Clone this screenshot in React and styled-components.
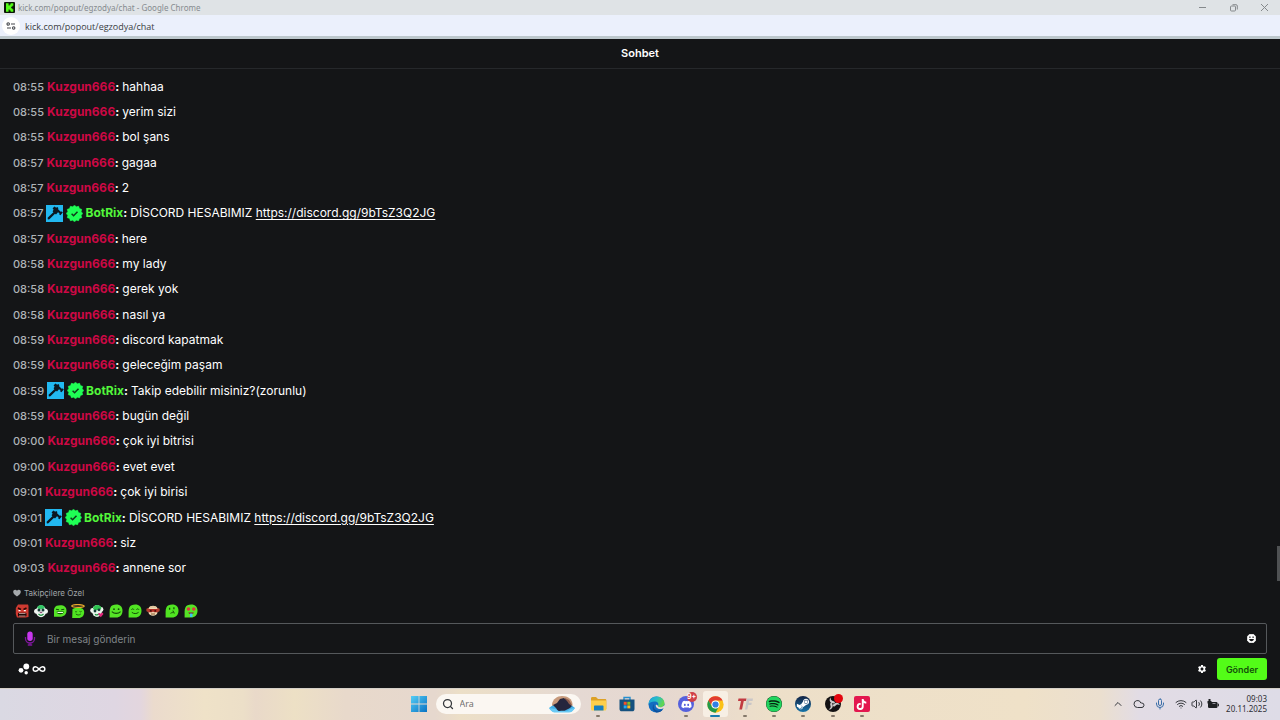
import React from "react";
import styled, { createGlobalStyle } from "styled-components";
import { FaDiscord, FaSteamSymbol, FaTiktok, FaSpotify } from "react-icons/fa";
import { MdSettings } from "react-icons/md";
import { Search, ChevronUp, Cloud, Mic, Wifi, Volume2, Infinity as InfinityIcon } from "lucide-react";

const GlobalStyle = createGlobalStyle`
  * { box-sizing: border-box; }
  body {
    margin: 0;
    background: #141517;
    font-family: Inter, "Liberation Sans", sans-serif;
  }
  button { border: 0; padding: 0; background: none; color: inherit; font: inherit; cursor: pointer; }
  svg { display: block; flex: none; }
`;

const Screen = styled.div`
  display: flex;
  flex-direction: column;
  min-height: 100vh;
`;

const TitleBar = styled.header`
  display: flex;
  align-items: center;
  gap: 3px;
  height: 15px;
  padding: 0 10px 0 4px;
  background: #dfe3e6;
  color: #868b8f;
  font: 8px/15px "Noto Sans", sans-serif;
`;

const WindowTitle = styled.span`
  flex: 1;
`;

const WindowControls = styled.div`
  display: flex;
  gap: 20px;
  color: #85898c;
`;

const WindowButton = styled.button`
  display: grid;
  place-items: center;
  width: 11px;
  height: 15px;
`;

const AddressBar = styled.div`
  display: flex;
  align-items: center;
  gap: 5px;
  height: 24px;
  padding-left: 2px;
  background: #ebf0fc;
  border-bottom: 3px solid #bcc7cc;
`;

const SiteInfo = styled.button`
  display: grid;
  place-items: center;
  width: 18px;
  height: 18px;
  border-radius: 9px;
  background: #fff;
`;

const Address = styled.input`
  flex: 1;
  min-width: 0;
  border: 0;
  padding: 2px 0 0;
  outline: 0;
  background: none;
  color: #3a3d42;
  font: 9px/18px "Open Sans", sans-serif;
`;

const Chat = styled.main`
  flex: 1;
  display: flex;
  flex-direction: column;
  color: #fff;
`;

const ChatHeader = styled.h1`
  margin: 0;
  height: 30px;
  border-bottom: 1px solid #26282b;
  font-size: 11px;
  font-weight: 600;
  line-height: 29px;
  text-align: center;
`;

const MessageArea = styled.section`
  flex: 1;
  display: flex;
  align-items: flex-end;
  padding: 5px 0 2px 13px;
`;

const MessageList = styled.ol`
  flex: 1;
  align-self: stretch;
  display: flex;
  flex-direction: column;
  margin: 0;
  padding: 0;
  list-style: none;
`;

const Message = styled.li`
  flex: 1;
  display: flex;
  align-items: center;
  font-size: 12px;
  line-height: 20px;
  white-space: pre;
`;

const Time = styled.time`
  margin-right: 3px;
  color: #afb4b7;
  font-size: 11px;
  font-weight: 500;
`;

const Author = styled.b`
  color: ${(p) => (p.$bot ? "#53f83b" : "#cd0845")};
  font-weight: 700;
`;

const Colon = styled.b`
  margin-right: 3px;
`;

const Badges = styled.span`
  display: flex;
  gap: 3px;
  margin-right: 2px;
`;

const MessageLink = styled.a`
  color: #fff;
  text-decoration: underline;
  text-underline-offset: 2px;
`;

const ScrollThumb = styled.div`
  width: 3px;
  height: 35px;
  background: #4f5153;
`;

const Composer = styled.form`
  padding: 0 13px 8px;
`;

const ModeNote = styled.p`
  display: flex;
  align-items: center;
  gap: 3px;
  margin: 0;
  height: 20px;
  color: #a0a5a8;
  font-size: 8px;
`;

const EmoteRow = styled.div`
  display: flex;
  width: 187px;
  height: 16px;
  margin-bottom: 4px;
`;

const EmoteButton = styled.button`
  flex: 1;
  display: grid;
  place-items: center;
`;

const Field = styled.label`
  display: flex;
  align-items: center;
  gap: 11px;
  height: 31px;
  padding: 0 10px;
  border: 1px solid #55585b;
  border-radius: 2px;
`;

const MessageInput = styled.input`
  flex: 1;
  min-width: 0;
  border: 0;
  padding: 0;
  outline: 0;
  background: none;
  color: #fff;
  font: 10px/20px Inter, sans-serif;
  &::placeholder { color: #808589; opacity: 1; }
`;

const ComposerFooter = styled.div`
  display: flex;
  align-items: center;
  gap: 2px;
  padding: 4px 0 0 5px;
`;

const SettingsButton = styled.button`
  margin-left: auto;
  margin-right: 8px;
`;

const SendButton = styled.button`
  width: 50px;
  height: 22px;
  border-radius: 3px;
  background: #53fc18;
  color: #14500a;
  font-size: 9px;
  font-weight: 600;
`;

const Taskbar = styled.footer`
  display: grid;
  grid-template-columns: 1fr auto 1fr;
  align-items: center;
  height: 32px;
  box-shadow: inset 0 1px #d5d0c8;
  background: linear-gradient(90deg, #dad9e3 0%, #dfd6e2 9%, #e3d6de 11%, #ebdbcd 12%, #efe2c8 16%, #ecdfc8 19%, #e9d9c9 20%, #ede0c5 23%, #e8d9cb 27%, #e6d8ce 34%, #ecdfc7 36%, #e5d9d3 45%, #e6d8d0 52%, #eddfc9 60%, #efe1c8 80%, #ebdfcf 86%, #e2dce5 89%, #dedce7 100%);
`;

const TaskbarCenter = styled.nav`
  grid-column: 2;
  display: flex;
  align-items: center;
`;

const StartButton = styled.button`
  display: grid;
  place-items: center;
  width: 30px;
  height: 30px;
`;

const SearchBox = styled.label`
  display: flex;
  align-items: center;
  gap: 6px;
  width: 145px;
  height: 20px;
  margin: 0 3px 0 2px;
  padding: 0 5px 0 6px;
  border-radius: 10px;
  background: #fbf7f2;
  color: #33363a;
`;

const SearchInput = styled.input`
  flex: 1;
  min-width: 0;
  border: 0;
  padding: 0;
  outline: 0;
  background: none;
  font: 9px/18px "Open Sans", sans-serif;
  &::placeholder { color: #6c6a69; opacity: 1; }
`;

const AppRow = styled.div`
  display: flex;
  width: 293px;
`;

const AppSlot = styled.div`
  flex: 1;
  display: flex;
  justify-content: center;
`;

const AppButton = styled.button`
  position: relative;
  display: grid;
  place-items: center;
  width: 25px;
  height: 26px;
  border-radius: 3px;
  background: ${(p) => (p.$active ? "#f7efe4" : "none")};
  &::after {
    content: "";
    position: absolute;
    bottom: 0;
    width: ${(p) => (p.$active ? "10px" : "4px")};
    height: 2px;
    border-radius: 1px;
    background: ${(p) => (p.$active ? "#1a7cb0" : "#85796b")};
    display: ${(p) => (p.$idle ? "none" : "block")};
  }
`;

const AppTile = styled.span`
  display: grid;
  place-items: center;
  width: 16px;
  height: 16px;
  border-radius: ${(p) => p.$radius || "8px"};
  background: ${(p) => p.$fill};
  color: #fff;
`;

const CountBadge = styled.span`
  position: absolute;
  top: 1px;
  right: 2px;
  width: 10px;
  height: 10px;
  border-radius: 5px;
  background: #cf3f48;
  color: #fff;
  font: 700 7px/10px Inter, sans-serif;
  text-align: center;
`;

const RecordDot = styled.span`
  position: absolute;
  top: 3px;
  right: 2px;
  width: 9px;
  height: 9px;
  border-radius: 5px;
  background: #e3060f;
`;

const Tray = styled.div`
  grid-column: 3;
  justify-self: end;
  display: flex;
  align-items: center;
  padding-right: 13px;
  color: #35373c;
`;

const TrayGroup = styled.div`
  display: flex;
  margin-right: 3px;
`;

const TrayButton = styled.button`
  display: grid;
  place-items: center;
  width: ${(p) => (p.$tight ? "16px" : "21px")};
  height: 22px;
`;

const Clock = styled.time`
  width: 46px;
  padding-bottom: 1px;
  color: #2d2e33;
  font: 8px/10px "Noto Sans", sans-serif;
  text-align: right;
`;

const KickLogo = () => (
  <svg width="11" height="11" viewBox="0 0 11 11" aria-hidden="true">
    <rect width="11" height="11" rx="1" fill="#0b1508" />
    <path d="M2 1.2h2.6v2.3h1V2.400h1V1.200h2.700v2.600h-1v1H7.200v1.400h1.100v1h1v2.600H6.600V8.600h-1V7.500h-1v2.300H2z" fill="#53fc18" />
  </svg>
);

const TuneIcon = () => (
  <svg width="10" height="8" viewBox="0 0 10 8" fill="none" stroke="#44474c" strokeWidth="1.100" aria-hidden="true">
    <circle cx="2.200" cy="2" r="1.200" />
    <path d="M5 2h4M1 6h4" />
    <circle cx="7.700" cy="6" r="1.200" />
  </svg>
);

const HammerBadge = () => (
  <svg width="17" height="17" viewBox="0 0 17 17" aria-label="Moderator">
    <rect width="17" height="17" fill="#22b8f0" />
    <path d="M6.600 3.300l2-1.800 1.500 1.300 1.200-.9 1 1-.2 1.300 2.600 2.500 1.200-.2.9 1-2.400 2.700-1.100-.8.1-1.200-1.400-1L10 9.500 9 8.800l-5.600 5.400-1.500.2-.3-1.600L7.400 7.300l-.8-1 1-1.500z" fill="#0b1720" />
  </svg>
);

const sealPoints = Array.from({ length: 24 }, (_, i) => {
  const r = i % 2 ? 6.900 : 8.300;
  const a = (i * Math.PI) / 12;
  return `${(8.5 + r * Math.sin(a)).toFixed(2)},${(8.5 - r * Math.cos(a)).toFixed(2)}`;
}).join(" ");

const VerifiedBadge = () => (
  <svg width="17" height="17" viewBox="0 0 17 17" aria-label="Verified">
    <polygon points={sealPoints} fill="#1fff55" stroke="#1fff55" strokeWidth="0.600" strokeLinejoin="round" />
    <path d="M5.600 8.700l2 2 3.900-4" fill="none" stroke="#10381b" strokeWidth="1.500" />
  </svg>
);

const HeartIcon = () => (
  <svg width="8" height="8" viewBox="0 0 8 8" fill="#a5a9ac" aria-hidden="true">
    <path d="M4 7.500C1.500 5.800.2 4.500.2 2.700.2 1.400 1.100.7 2.100.7c.8 0 1.500.4 1.900 1 .4-.6 1.100-1 1.900-1 1 0 1.900.7 1.900 2 0 1.800-1.300 3.100-3.800 4.800z" />
  </svg>
);

const MicPurple = () => (
  <svg width="12" height="15" viewBox="0 0 12 15" fill="none" aria-hidden="true">
    <rect x="3.300" y="0.500" width="5.400" height="9.500" rx="2.700" fill="#c837ef" />
    <path d="M1.500 6v1.500a4.500 4.500 0 0 0 9 0V6M6 12v2M3.800 14h4.400" stroke="#7e179b" strokeWidth="1.300" />
  </svg>
);

const SmileIcon = () => (
  <svg width="9" height="9" viewBox="0 0 9 9" aria-hidden="true">
    <path d="M2.500.3h4L8.700 2.500v4L6.500 8.700h-4L.3 6.500v-4z" fill="#fff" stroke="#fff" strokeWidth="0.600" strokeLinejoin="round" />
    <rect x="2.300" y="2.500" width="1.200" height="1.400" fill="#141517" />
    <rect x="5.500" y="2.500" width="1.200" height="1.400" fill="#141517" />
    <path d="M2.100 5.100h4.800c-.2 1.400-1.100 2.100-2.400 2.100S2.300 6.500 2.100 5.100z" fill="#141517" />
  </svg>
);

const BubblesIcon = () => (
  <svg width="12" height="12" viewBox="0 0 12 12" fill="#fff" aria-hidden="true">
    <circle cx="8.300" cy="3.500" r="2.900" />
    <circle cx="3" cy="7.300" r="2.400" />
    <circle cx="8.200" cy="9.700" r="1.700" />
  </svg>
);

const blob = "M1.500 3.300C2.300 1.300 4.500.5 7.300.5c4 0 6.200 2.400 6.200 6.200 0 4-2.500 6.800-6.500 6.800H.6V7.500c0-1.600.3-3 .9-4.200z";

const faces = {
  rage: (
    <>
      <path d="M3 .5h10l.5 1.500v11l-3 .5H2L.8 10V4z" fill="#cf3a31" />
      <path d="M3 4l3 1.500M11.500 4L8.500 5.500" stroke="#2a0906" strokeWidth="1.500" />
      <path d="M3.500 6h2v1.300h-2zM8.800 6h2v1.300h-2z" fill="#fff" />
      <rect x="3" y="8.700" width="8.500" height="3.800" rx="1" fill="#1e0805" />
      <path d="M4 9.500h6.500M4 12h6.500" stroke="#e9c2bd" strokeWidth="0.700" />
    </>
  ),
  clown: (
    <>
      <circle cx="2.600" cy="7.200" r="2.500" fill="#f1f5f0" />
      <circle cx="11.400" cy="7.200" r="2.500" fill="#f1f5f0" />
      <ellipse cx="7" cy="7.200" rx="5" ry="6" fill="#eff6f1" />
      <path d="M3 4c1-4 7-4 8 0-2 1.500-6 1.500-8 0z" fill="#33c765" />
      <circle cx="5" cy="6" r="1.500" fill="#173b37" />
      <circle cx="9" cy="6" r="1.500" fill="#173b37" />
      <path d="M5.800 7.700h2.400v1.400H5.800z" fill="#8f557a" />
      <path d="M4.500 10c1.500 1.700 3.500 1.700 5 0" stroke="#1d9142" strokeWidth="1.200" fill="none" />
    </>
  ),
  grin: (
    <>
      <path d="M1.500 4C2.300 2 4.500 1.300 7.300 1.300c4 0 6.200 2 6.200 5.400 0 3.800-2.500 6-6.500 6H1V7.500C1 6 1 5 1.500 4z" fill="#55e526" />
      <path d="M3 5.300l3 .4M8.200 5.700l3-.4" stroke="#154c09" strokeWidth="1.100" />
      <path d="M3.600 7.500h7.200c-.3 2.100-1.600 2.700-3.600 2.700s-3.300-.6-3.600-2.700z" fill="#154c09" />
      <path d="M4.400 8h5.600v1H4.400z" fill="#e9ffe0" />
    </>
  ),
  angel: (
    <>
      <path d="M1.500 5.100C2.800 4 5 3.700 7.300 3.700c3.800 0 5.900 1.400 5.900 4.300 0 3.800-2.300 6-5.700 6H1.200z" fill="#50e522" />
      <ellipse cx="7" cy="2" rx="6.200" ry="1.400" fill="none" stroke="#e8a92c" strokeWidth="1.300" />
      <path d="M4 7.400c.6.600 1.500.6 2.100 0M8.500 7.400c.6.600 1.500.6 2.100 0M4.800 10c1.600 1.300 3.400 1.300 5 0" stroke="#1b670b" fill="none" />
    </>
  ),
  clownLove: (
    <>
      <circle cx="2.600" cy="6.500" r="2.400" fill="#f1f5f0" />
      <circle cx="11" cy="5.500" r="2.400" fill="#f1f5f0" />
      <ellipse cx="7" cy="7" rx="5" ry="6" fill="#e6f5e9" />
      <path d="M3 5c0-4.500 7-5.500 8.500-1-1 2.500-6 3-8.500 1z" fill="#2fc451" />
      <circle cx="5" cy="7" r="1.400" fill="#173b37" />
      <circle cx="9" cy="5.800" r="1.400" fill="#173b37" />
      <path d="M5 10.300c1.500 1.200 2.500 1 4-.3" stroke="#1d9142" strokeWidth="1.200" fill="none" />
      <path d="M10.800 13.300L8.300 10.600c-.5-1.500 1.300-2.200 2.300-.9.600-1.600 3.100-1.200 2.700.6z" fill="#e0287b" />
    </>
  ),
  smile: (
    <>
      <path d={blob} fill="#55e526" />
      <circle cx="5" cy="5.200" r="0.900" fill="#154c09" />
      <circle cx="9.600" cy="5.200" r="0.900" fill="#154c09" />
      <path d="M2.800 7.600c2.500 2.300 6.300 2.300 8.800 0" stroke="#154c09" strokeWidth="1.100" fill="none" />
    </>
  ),
  happy: (
    <>
      <path d={blob} fill="#50e522" />
      <path d="M3.500 5.700c.7-1.200 1.700-1.200 2.400 0M8.500 5.700c.7-1.200 1.700-1.200 2.400 0M3.800 8.300c2 1.700 4.800 1.700 6.800 0" stroke="#154c09" fill="none" />
    </>
  ),
  monkey: (
    <>
      <circle cx="2.200" cy="6" r="2" fill="#b0402d" />
      <circle cx="11.800" cy="6" r="2" fill="#b0402d" />
      <path d="M2.500 5c0-4 9-4 9 0v3c0 5-9 5-9 0z" fill="#efd9b4" />
      <path d="M2.800 4c1-3 7.500-3 8.400 0z" fill="#e3c9a0" />
      <path d="M2.200 5h9.600v3.300H8L7 7.400l-1 .9H2.200z" fill="#b02a22" />
      <path d="M4 6.800h1.600M8.500 6.800H10" stroke="#2a0906" strokeWidth="1.200" />
      <path d="M5 10h4" stroke="#8b5a33" />
    </>
  ),
  unsure: (
    <>
      <path d={blob} fill="#50e522" />
      <path d="M4.600 3.800v2M8.900 3.300v2" stroke="#154c09" strokeWidth="1.300" />
      <path d="M5.500 9.300c1.200-.9 3-.9 4.300-.2M7.500 7l1.500.5" stroke="#154c09" fill="none" />
    </>
  ),
  drool: (
    <>
      <path d={blob} fill="#55e526" />
      <circle cx="4.500" cy="5" r="1.800" fill="#e23244" />
      <circle cx="9.800" cy="5" r="1.800" fill="#e23244" />
      <path d="M4.300 8.500h5.500c-.5 2-4.800 2-5.500 0z" fill="#8c1630" />
      <path d="M6 9.500h2.500V13H6z" fill="#38c9ed" />
    </>
  ),
};

const Emote = ({ name }) => (
  <svg width="14" height="14" viewBox="0 0 14 14" aria-hidden="true">
    {faces[name]}
  </svg>
);

const WindowsLogo = () => (
  <svg width="16" height="16" viewBox="0 0 16 16" aria-hidden="true">
    <defs>
      <linearGradient id="win" x1="0" y1="0" x2="1" y2="1">
        <stop offset="0" stopColor="#55cdf4" />
        <stop offset="1" stopColor="#0872c4" />
      </linearGradient>
    </defs>
    <path d="M0 0h7.600v7.600H0zM8.400 0H16v7.600H8.400zM0 8.400h7.600V16H0zM8.400 8.400H16V16H8.400z" fill="url(#win)" />
  </svg>
);

const SearchArt = () => (
  <svg width="28" height="18" viewBox="0 0 28 18" aria-hidden="true">
    <path d="M4 9C5 4 9 1 14 1c6 0 10 3 10.500 8v3H4z" fill="#c79a7c" />
    <path d="M17 3l4 2 3 5-7 1z" fill="#8d5d4d" />
    <path d="M1 13c3-3 8-4 13-4s10 1 13 4l-4 4H5z" fill="#43b0e8" />
    <path d="M8 13l-3-3 4-2 3-4 4-1 3 3 2 3 3 2-2 2-6 3H10z" fill="#25263d" />
    <path d="M1 13c3 1 6 0 8 2s5 0 8 1 5-3 10-3c-2 3-4 4.500-6 4.500H6C4 17 2 15 1 13z" fill="#69c9f4" />
  </svg>
);

const FolderIcon = () => (
  <svg width="17" height="16" viewBox="0 0 17 16" aria-hidden="true">
    <path d="M1 2.500C1 1.500 1.500 1 2.500 1H6l2 2h7c.8 0 1.300.5 1.300 1.300V13H1z" fill="#dda126" />
    <path d="M1 4.500h15.300V13c0 1-.5 1.500-1.500 1.500H2.500C1.500 14.500 1 14 1 13z" fill="#fdcf4c" />
    <path d="M4 10.500c0-.6.400-1 1-1h7.500c.6 0 1 .4 1 1v4H4z" fill="#187fc0" />
  </svg>
);

const StoreIcon = () => (
  <svg width="16" height="16" viewBox="0 0 16 16" aria-hidden="true">
    <path d="M5 4V1.500h6V4" fill="none" stroke="#258fd0" strokeWidth="1.400" />
    <path d="M.5 3.500h15V13c0 1.400-.9 2.300-2.300 2.300H2.800C1.400 15.300.5 14.400.5 13z" fill="#15517f" />
    <path d="M4.700 5.800h3v3h-3z" fill="#f2532c" />
    <path d="M8.300 5.800h3v3h-3z" fill="#84bd28" />
    <path d="M4.700 9.400h3v3h-3z" fill="#25aaf0" />
    <path d="M8.300 9.400h3v3h-3z" fill="#fcbc24" />
  </svg>
);

const EdgeIcon = () => (
  <svg width="17" height="17" viewBox="0 0 17 17" aria-hidden="true">
    <defs>
      <linearGradient id="edgeTop" x1="0" y1="0" x2="1" y2="0.400">
        <stop offset="0" stopColor="#1f9fdc" />
        <stop offset="0.500" stopColor="#26bccb" />
        <stop offset="1" stopColor="#61d651" />
      </linearGradient>
    </defs>
    <circle cx="8.500" cy="8.500" r="8" fill="#126cc0" />
    <path d="M.5 8.500C.7 4 4 .5 8.600.5c4.700 0 7.900 3.300 7.900 6.700 0 2.600-1.900 4-4.200 4-1.600 0-2.700-.6-2.300-1.400.7-1.100.8-3.800-2.600-4.300C4.300 5.100 1.500 6.500.5 8.500z" fill="url(#edgeTop)" />
    <path d="M6 8c-1.500 4.500 2 8 7 6.200 1-.4 1.700-1 2.200-1.700-1.300 3-4.200 4-6.700 4C4.500 15 3.500 10.500 6 8z" fill="#0d4f9c" />
    <path d="M8 8.500c-1 2 1 4.700 4.500 4.500 1.500 0 2.600-.6 3.300-1l-.7 1.800L17 15V9.500l-1.500.5c-1 1-2.200 1.200-3.200 1.200-1.600 0-2.700-.6-2.300-1.400z" fill="#e8dbd0" />
  </svg>
);

const ChromeIcon = () => (
  <svg width="17" height="17" viewBox="0 0 24 24" aria-hidden="true">
    <circle cx="12" cy="12" r="11.500" fill="#fbc116" />
    <path d="M2 6.300A11.500 11.500 0 0 1 22 6.300H12a5.700 5.700 0 0 0-5 8.500z" fill="#e23c30" />
    <path d="M2 6.300l5 8.500a5.700 5.700 0 0 0 9.900.1L12 23.500A11.500 11.500 0 0 1 2 6.300z" fill="#229a4b" />
    <circle cx="12" cy="12" r="5.700" fill="#fff" />
    <circle cx="12" cy="12" r="4.400" fill="#317fe4" />
  </svg>
);

const TfIcon = () => (
  <svg width="16" height="14" viewBox="0 0 16 14" aria-hidden="true">
    <path d="M1.500 1.500h8L9 4H6.800L5 12.500H2.300L4 4H1z" fill="#c13a42" />
    <path d="M10 1.500h6L15.500 4h-3.300l-.4 1.800h3l-.5 2.200h-3l-1 4.500H8z" fill="#c9c6c7" />
  </svg>
);

const ObsIcon = () => (
  <svg width="16" height="16" viewBox="0 0 16 16" aria-hidden="true">
    <circle cx="8" cy="8" r="8" fill="#131113" />
    {[0, 120, 240].map((angle) => (
      <path
        key={angle}
        d="M8 7.300C5.600 7 4.200 5.200 4.700 2.900c.2-.6.500-1 .9-1.300-.2 2.200 1 3.400 3 3.600 1 .2 1.500 1 1.300 1.900-.5.500-1.200.500-1.900.2z"
        fill="#cbc8c8"
        transform={`rotate(${angle} 8 8)`}
      />
    ))}
  </svg>
);

const BatteryIcon = () => (
  <svg width="12" height="10" viewBox="0 0 12 10" fill="#1e2023" aria-hidden="true">
    <rect x="1" y="3" width="9.500" height="6" rx="1.200" />
    <rect x="10.700" y="4.700" width="1.200" height="2.600" />
    <path d="M1.500 0v2H.5v2.500h4V2h-1V0z" />
    <path d="M5.500 4.500h3" stroke="#dedce7" strokeWidth="0.600" />
  </svg>
);

const user = "Kuzgun666";
const messages = [
  { time: "08:55", text: "hahhaa" },
  { time: "08:55", text: "yerim sizi" },
  { time: "08:55", text: "bol şans" },
  { time: "08:57", text: "gagaa" },
  { time: "08:57", text: "2" },
  { time: "08:57", bot: true, text: "DİSCORD HESABIMIZ ", link: "https://discord.gg/9bTsZ3Q2JG" },
  { time: "08:57", text: "here" },
  { time: "08:58", text: "my lady" },
  { time: "08:58", text: "gerek yok" },
  { time: "08:58", text: "nasıl ya" },
  { time: "08:59", text: "discord kapatmak" },
  { time: "08:59", text: "geleceğim paşam" },
  { time: "08:59", bot: true, text: "Takip edebilir misiniz?(zorunlu)" },
  { time: "08:59", text: "bugün değil" },
  { time: "09:00", text: "çok iyi bitrisi" },
  { time: "09:00", text: "evet evet" },
  { time: "09:01", text: "çok iyi birisi" },
  { time: "09:01", bot: true, text: "DİSCORD HESABIMIZ ", link: "https://discord.gg/9bTsZ3Q2JG" },
  { time: "09:01", text: "siz" },
  { time: "09:03", text: "annene sor" },
];

const emotes = ["rage", "clown", "grin", "angel", "clownLove", "smile", "happy", "monkey", "unsure", "drool"];

const apps = [
  { name: "File Explorer", icon: <FolderIcon /> },
  { name: "Store", icon: <StoreIcon />, idle: true },
  { name: "Edge", icon: <EdgeIcon />, idle: true },
  { name: "Discord", icon: <AppTile $fill="#5560dd"><FaDiscord size={11} /></AppTile>, extra: <CountBadge>9+</CountBadge> },
  { name: "Chrome", icon: <ChromeIcon />, active: true },
  { name: "TF", icon: <TfIcon /> },
  { name: "Spotify", icon: <AppTile $fill="#06200e"><FaSpotify size={16} color="#22d45f" /></AppTile> },
  { name: "Steam", icon: <AppTile $fill="linear-gradient(#132344, #1673a8)"><FaSteamSymbol size={14} /></AppTile> },
  { name: "OBS", icon: <ObsIcon />, extra: <RecordDot /> },
  { name: "TikTok", icon: <AppTile $fill="#e3174f" $radius="2px"><FaTiktok size={11} /></AppTile> },
];

export default function App() {
  return (
    <Screen>
      <GlobalStyle />
      <TitleBar>
        <KickLogo />
        <WindowTitle>kick.com/popout/egzodya/chat - Google Chrome</WindowTitle>
        <WindowControls>
          <WindowButton aria-label="Minimize">
            <svg width="7" height="7" viewBox="0 0 7 7" stroke="currentColor"><path d="M0 3.500h7" /></svg>
          </WindowButton>
          <WindowButton aria-label="Restore">
            <svg width="8" height="8" viewBox="0 0 8 8" fill="none" stroke="currentColor">
              <rect x="0.500" y="2" width="5" height="5" rx="1" />
              <path d="M2.500.7H6A1.300 1.300 0 0 1 7.300 2v3.500" />
            </svg>
          </WindowButton>
          <WindowButton aria-label="Close">
            <svg width="7" height="7" viewBox="0 0 7 7" stroke="currentColor"><path d="M0 0l7 7M7 0L0 7" /></svg>
          </WindowButton>
        </WindowControls>
      </TitleBar>
      <AddressBar>
        <SiteInfo aria-label="Site information"><TuneIcon /></SiteInfo>
        <Address aria-label="Address" defaultValue="kick.com/popout/egzodya/chat" />
      </AddressBar>

      <Chat>
        <ChatHeader>Sohbet</ChatHeader>
        <MessageArea>
          <MessageList>
            {messages.map((m, i) => (
              <Message key={i}>
                <Time>{m.time}</Time>
                {m.bot && <Badges><HammerBadge /><VerifiedBadge /></Badges>}
                <Author $bot={m.bot}>{m.bot ? "BotRix" : user}</Author>
                <Colon>:</Colon>
                <span>
                  {m.text}
                  {m.link && <MessageLink href={m.link}>{m.link}</MessageLink>}
                </span>
              </Message>
            ))}
          </MessageList>
          <ScrollThumb />
        </MessageArea>

        <Composer onSubmit={(e) => e.preventDefault()}>
          <ModeNote><HeartIcon />Takipçilere Özel</ModeNote>
          <EmoteRow>
            {emotes.map((name) => (
              <EmoteButton key={name} type="button" aria-label={name}><Emote name={name} /></EmoteButton>
            ))}
          </EmoteRow>
          <Field>
            <MicPurple />
            <MessageInput aria-label="Bir mesaj gönderin" placeholder="Bir mesaj gönderin" />
            <button type="button" aria-label="Emoji"><SmileIcon /></button>
          </Field>
          <ComposerFooter>
            <button type="button" aria-label="Points"><BubblesIcon /></button>
            <InfinityIcon size={14} strokeWidth={2.5} />
            <SettingsButton type="button" aria-label="Settings"><MdSettings size={10} /></SettingsButton>
            <SendButton type="submit">Gönder</SendButton>
          </ComposerFooter>
        </Composer>
      </Chat>

      <Taskbar>
        <TaskbarCenter>
          <StartButton aria-label="Start"><WindowsLogo /></StartButton>
          <SearchBox>
            <Search size={12} strokeWidth={2.5} />
            <SearchInput aria-label="Ara" placeholder="Ara" />
            <SearchArt />
          </SearchBox>
          <AppRow>
            {apps.map((a) => (
              <AppSlot key={a.name}>
                <AppButton aria-label={a.name} $active={a.active} $idle={a.idle}>
                  {a.icon}
                  {a.extra}
                </AppButton>
              </AppSlot>
            ))}
          </AppRow>
        </TaskbarCenter>
        <Tray>
          <TrayGroup>
            <TrayButton aria-label="Show hidden icons"><ChevronUp size={12} /></TrayButton>
            <TrayButton aria-label="OneDrive"><Cloud size={12} /></TrayButton>
            <TrayButton aria-label="Microphone"><Mic size={12} color="#3a6ea8" /></TrayButton>
          </TrayGroup>
          <TrayButton $tight aria-label="Network"><Wifi size={12} /></TrayButton>
          <TrayButton $tight aria-label="Volume"><Volume2 size={12} /></TrayButton>
          <TrayButton $tight aria-label="Battery"><BatteryIcon /></TrayButton>
          <Clock>09:03<br />20.11.2025</Clock>
        </Tray>
      </Taskbar>
    </Screen>
  );
}
